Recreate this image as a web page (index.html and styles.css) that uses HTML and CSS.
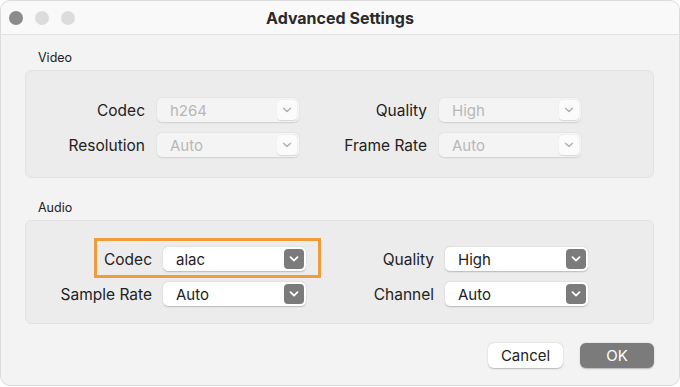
FILE: index.html
```html
<!DOCTYPE html>
<html lang="en">
<head>
    <meta charset="UTF-8" />
    <title>Advanced Settings</title>
    <link rel="stylesheet" href="styles.css">
</head>
<body>

    <div class="window">
        <div class="titlebar">
            <div class="lights">
                <span class="light dark"></span>
                <span class="light"></span>
                <span class="light"></span>
            </div>
            <div class="title">Advanced Settings</div>
        </div>

        <div class="content">
            <div class="group-label">Video</div>
            <div class="panel video">
                <label class="field-label">Codec</label>
                <div class="select disabled"><span>h264</span><i class="arrow"><svg viewBox="0 0 10 6"><path d="M1.5 1.2 L5 4.6 L8.5 1.2"/></svg></i></div>
                <label class="field-label">Quality</label>
                <div class="select disabled"><span>High</span><i class="arrow"><svg viewBox="0 0 10 6"><path d="M1.5 1.2 L5 4.6 L8.5 1.2"/></svg></i></div>

                <label class="field-label">Resolution</label>
                <div class="select disabled"><span>Auto</span><i class="arrow"><svg viewBox="0 0 10 6"><path d="M1.5 1.2 L5 4.6 L8.5 1.2"/></svg></i></div>
                <label class="field-label">Frame Rate</label>
                <div class="select disabled"><span>Auto</span><i class="arrow"><svg viewBox="0 0 10 6"><path d="M1.5 1.2 L5 4.6 L8.5 1.2"/></svg></i></div>
            </div>

            <div class="group-label audio-label">Audio</div>
            <div class="panel audio">
                <div class="highlight"></div>
                <label class="field-label">Codec</label>
                <div class="select"><span>alac</span><i class="arrow"><svg viewBox="0 0 10 6"><path d="M1.5 1.2 L5 4.6 L8.5 1.2"/></svg></i></div>
                <label class="field-label">Quality</label>
                <div class="select"><span>High</span><i class="arrow"><svg viewBox="0 0 10 6"><path d="M1.5 1.2 L5 4.6 L8.5 1.2"/></svg></i></div>

                <label class="field-label">Sample Rate</label>
                <div class="select"><span>Auto</span><i class="arrow"><svg viewBox="0 0 10 6"><path d="M1.5 1.2 L5 4.6 L8.5 1.2"/></svg></i></div>
                <label class="field-label">Channel</label>
                <div class="select"><span>Auto</span><i class="arrow"><svg viewBox="0 0 10 6"><path d="M1.5 1.2 L5 4.6 L8.5 1.2"/></svg></i></div>
            </div>

            <div class="actions">
                <button class="btn">Cancel</button>
                <button class="btn primary">OK</button>
            </div>
        </div>
    </div>

</body>
</html>
```

FILE: styles.css
```css
* {
    box-sizing: border-box;
}

body {
    margin: 0;
    background-color: #ffffff;
    font-family: 'Inter', 'Liberation Sans', sans-serif;
    color: #232323;
}

.window {
    width: 680px;
    height: 386px;
    background-color: #f3f3f3;
    border: 1px solid #dcdcdc;
    border-radius: 10px;
    overflow: hidden;
    display: flex;
    flex-direction: column;
}

.titlebar {
    height: 34px;
    flex-shrink: 0;
    background-color: #f9f9f9;
    border-bottom: 1px solid #e2e2e2;
    display: flex;
    align-items: center;
    position: relative;
}

.lights {
    display: flex;
    gap: 12px;
    padding-left: 8px;
}

.light {
    width: 14px;
    height: 14px;
    border-radius: 50%;
    background-color: #dcdcdc;
}

.light.dark {
    background-color: #8b8b8b;
}

.title {
    position: absolute;
    left: 0;
    right: 0;
    text-align: center;
    font-size: 16px;
    font-weight: 700;
    color: #2a2a2a;
}

.content {
    flex: 1;
    padding: 0 25px 0 24px;
}

.group-label {
    font-size: 12.5px;
    color: #222;
    padding-left: 13px;
    margin-top: 15px;
    height: 20px;
    line-height: 16px;
}

.audio-label {
    margin-top: 22px;
}

.panel {
    position: relative;
    background-color: #ececec;
    border: 1px solid #e2e2e2;
    border-radius: 6px;
    display: grid;
    align-items: center;
}

/* colonne etichette + menu */
.panel.video {
    height: 108px;
    padding-top: 27px;
    grid-template-columns: 119px 142px 116px 142px;
    column-gap: 12px;
    row-gap: 11px;
    align-content: start;
}

.panel.audio {
    height: 104px;
    padding-top: 26px;
    grid-template-columns: 126px 143px 117px 143px;
    column-gap: 11px;
    row-gap: 11px;
    align-content: start;
}

.field-label {
    text-align: right;
    font-size: 15.5px;
    color: #222;
}

.select {
    height: 24px;
    background-color: #ffffff;
    border-radius: 5px;
    box-shadow: 0 0.5px 1.5px rgba(0, 0, 0, 0.22);
    display: flex;
    align-items: center;
    justify-content: space-between;
    padding: 0 2px 0 13px;
    font-size: 15px;
    color: #222;
}

.arrow {
    width: 20px;
    height: 20px;
    border-radius: 4px;
    background-color: #7b7b7b;
    display: flex;
    align-items: center;
    justify-content: center;
}

.arrow svg {
    width: 10px;
    height: 6px;
    fill: none;
    stroke: #ffffff;
    stroke-width: 1.8;
    stroke-linecap: round;
    stroke-linejoin: round;
}

.select.disabled {
    background-color: #f4f4f4;
    color: #b8b8b8;
    box-shadow: 0 0.5px 1.5px rgba(0, 0, 0, 0.12);
}

.select.disabled .arrow {
    background-color: #fbfbfb;
    box-shadow: 0 0.5px 1px rgba(0, 0, 0, 0.12);
}

.select.disabled .arrow svg {
    stroke: #b0b0b0;
    stroke-width: 1.4;
}

.highlight {
    position: absolute;
    left: 68px;
    top: 17px;
    width: 227px;
    height: 40px;
    border: 3px solid #f09c38;
    pointer-events: none;
}

.actions {
    display: flex;
    justify-content: flex-end;
    gap: 17px;
    margin-top: 19px;
    padding-right: 0;
}

.btn {
    width: 75px;
    height: 25px;
    border: none;
    border-radius: 6px;
    background-color: #ffffff;
    box-shadow: 0 0.5px 1.5px rgba(0, 0, 0, 0.25);
    font-family: inherit;
    font-size: 15px;
    color: #222;
    padding: 0;
}

.btn.primary {
    width: 74px;
    background-color: #7b7b7b;
    color: #ffffff;
}
```
